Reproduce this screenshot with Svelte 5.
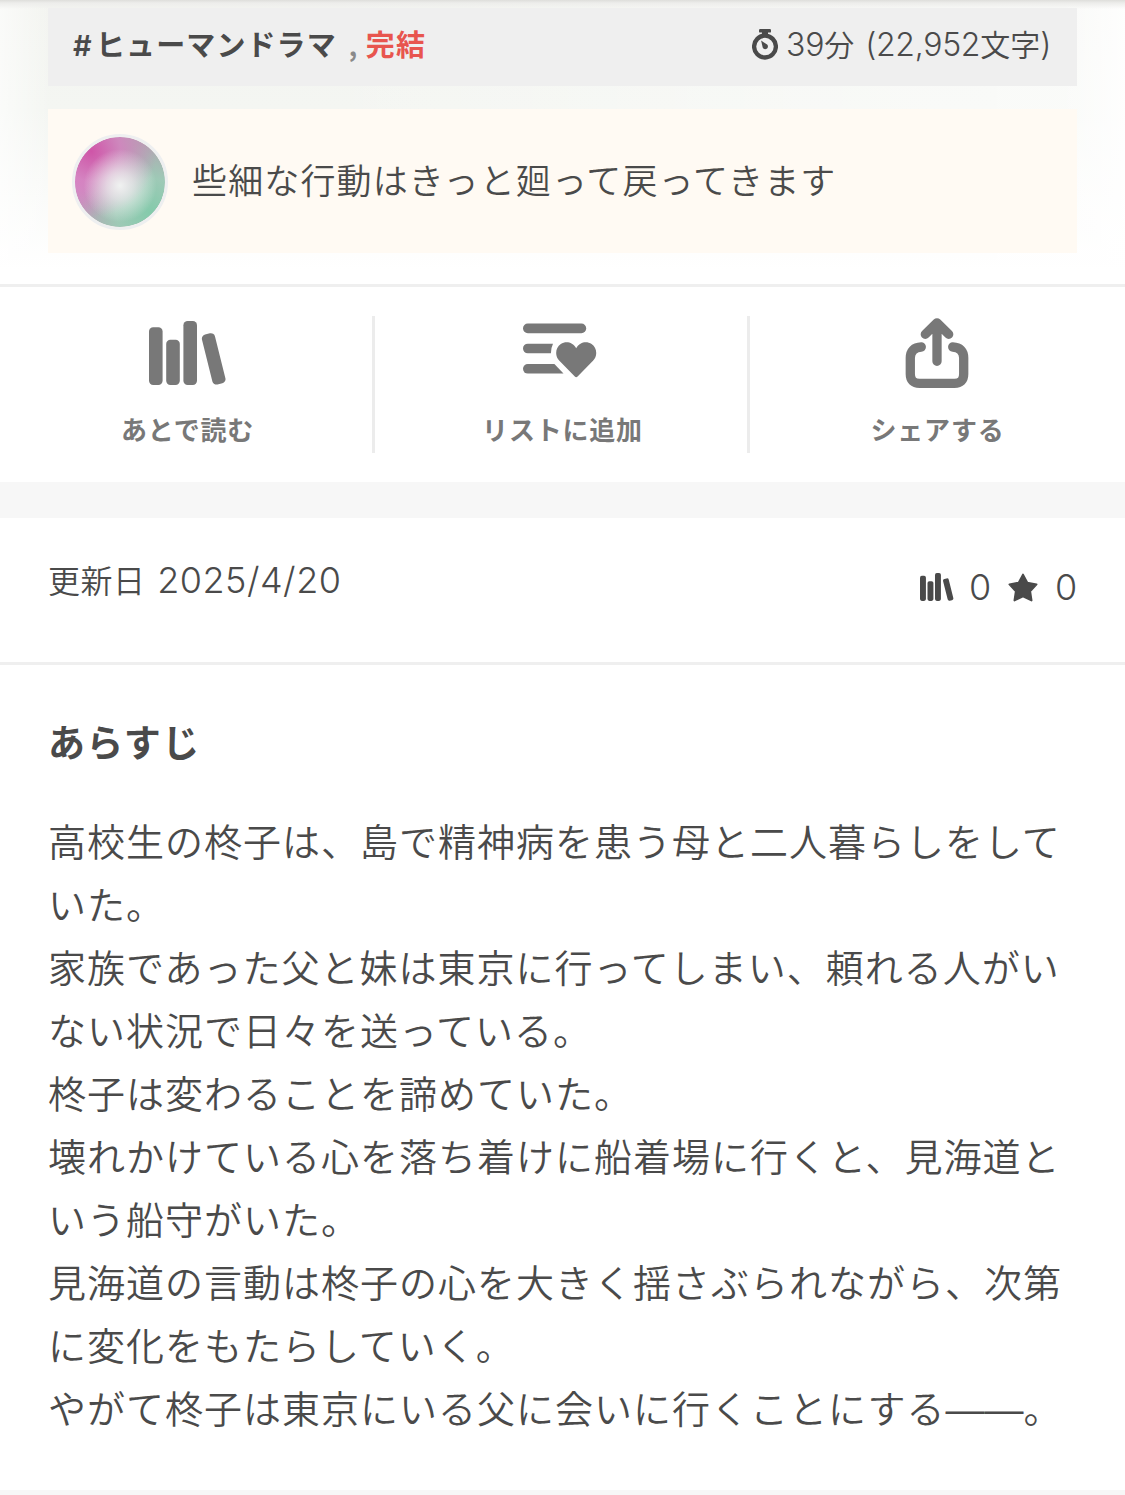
<script lang="ts">
  const tag = 'ヒューマンドラマ';
  const updatedAt = '2025/4/20';
  const counts = { shelf: 0, star: 0 };

  const synopsis = [
    '高校生の柊子は、島で精神病を患う母と二人暮らしをして',
    'いた。',
    '家族であった父と妹は東京に行ってしまい、頼れる人がい',
    'ない状況で日々を送っている。',
    '柊子は変わることを諦めていた。',
    '壊れかけている心を落ち着けに船着場に行くと、見海道と',
    'いう船守がいた。',
    '見海道の言動は柊子の心を大きく揺さぶられながら、次第',
    'に変化をもたらしていく。',
  ];
</script>

{#snippet books()}
  <svg class="books" viewBox="0 0 78 64" fill="currentColor">
    <rect x="0" y="6.3" width="13.6" height="57.7" rx="4.2" />
    <rect x="17.2" y="18.8" width="13.6" height="45.2" rx="4.2" />
    <rect x="34.4" y="0" width="13.6" height="64" rx="4.2" />
    <rect x="58" y="12.2" width="13.4" height="51.4" rx="4.2" transform="rotate(-14 64.7 37.9)" />
  </svg>
{/snippet}

<main class="page">
  <section class="top">
    <div class="tag-bar">
      <div class="tags">
        <span class="hash">#</span><span class="tag">{tag}</span><span class="comma">,</span><span class="state">完結</span>
      </div>
      <div class="length">
        <svg class="watch" viewBox="0 0 26 31">
          <rect x="7" y="0" width="12" height="3.6" rx="1.2" fill="currentColor" />
          <rect x="10" y="2" width="6" height="4" fill="currentColor" />
          <circle cx="13" cy="17.6" r="10.9" fill="none" stroke="currentColor" stroke-width="4.3" />
          <path d="M9.1 11.6l6 3.9a2.7 2.7 0 1 1-4.4 2.9z" fill="currentColor" />
        </svg>
        <span class="minutes">39<span class="unit">分</span></span>
        <span class="chars">(22,952<span class="unit">文字</span>)</span>
      </div>
    </div>
    <div class="comment">
      <div class="avatar"></div>
      <p>些細な行動はきっと廻って戻ってきます</p>
    </div>
  </section>

  <nav class="actions">
    <button>
      <span class="icon">{@render books()}</span>
      <span class="label">あとで読む</span>
    </button>
    <button>
      <span class="icon">
        <svg class="list" viewBox="0 0 74 55" fill="currentColor">
          <rect x="0" y="0.6" width="63.2" height="9.6" rx="4.8" />
          <path d="M4.8 20.7H30Q28 24.6 27.9 30.3H4.8a4.8 4.8 0 0 1 0-9.6z" />
          <path d="M4.8 41H31.4L40.5 50.6H4.8a4.8 4.8 0 0 1 0-9.6z" />
          <path d="M53.2 25.2C57 18.6 64 18.1 68.6 21.1C74.3 25 74.7 33 70 37.7L54.6 53.5Q53.2 54.9 51.8 53.5L36.4 37.7C31.7 33 32.1 25 37.8 21.1C42.4 18.1 49.4 18.6 53.2 25.2z" />
        </svg>
      </span>
      <span class="label">リストに追加</span>
    </button>
    <button>
      <span class="icon">
        <svg class="share" viewBox="0 0 64 72" fill="none" stroke="currentColor" stroke-width="9.3" stroke-linecap="round" stroke-linejoin="round">
          <path d="M16.3 30C9 30.3 5.3 34 5.3 41V57Q5.3 66.3 14.6 66.3H49.4Q58.7 66.3 58.7 57V41C58.7 34 55 30.3 47.7 30" />
          <path d="M32 44.3V6.3M20.3 17.3L32 5.8L43.7 17.3" />
        </svg>
      </span>
      <span class="label">シェアする</span>
    </button>
  </nav>

  <section class="info">
    <div class="updated">更新日 <span>{updatedAt}</span></div>
    <div class="counts">
      {@render books()}
      <span class="num">{counts.shelf}</span>
      <svg class="star" viewBox="0 0 30 29" fill="currentColor" stroke="currentColor" stroke-width="2" stroke-linejoin="round">
        <path d="M15 1.6L19.3 9.7L28.5 11.4L22.1 18.2L23.5 27.4L15 23.4L6.5 27.4L7.9 18.2L1.5 11.4L10.7 9.7z" />
      </svg>
      <span class="num">{counts.star}</span>
    </div>
  </section>

  <section class="synopsis">
    <h2>あらすじ</h2>
    {#each synopsis as line}
      <p>{line}</p>
    {/each}
    <p>やがて柊子は東京にいる父に会いに行くことにする<span class="dash">――</span>。</p>
  </section>
  <div class="footer-band"></div>
</main>

<style>
  :global(body) { margin: 0; background: #fff; overflow: hidden; }
  .page {
    width: 1125px; height: 1495px; overflow: hidden;
    display: flex; flex-direction: column;
    font-family: "Noto Sans CJK JP", sans-serif; font-weight: 350;
    color: #4a4a4a; white-space: nowrap;
  }
  p, h2 { margin: 0; }
  svg { display: block; flex: none; }

  .top {
    height: 276px; padding: 8px 48px 0;
    border-bottom: 3px solid #efefef;
    background:
      linear-gradient(#dededb, #ededeb 3px, #f4f4f200 9px),
      linear-gradient(90deg, #fff9 0, #fff0 50px, #fff0 1060px, #fffc 1125px),
      linear-gradient(90deg, #fff0 300px, #ffffff80 1000px),
      linear-gradient(#f3f4f0 0, #f4f6f2 110px, #fff 270px);
  }
  .tag-bar {
    height: 78px; box-sizing: border-box; padding: 0 26px 6px 25px;
    display: flex; justify-content: space-between; align-items: center;
    background: #efefef; font-size: 29px;
  }
  .tags { display: flex; align-items: baseline; font-weight: 700; padding-bottom: 2px; }
  .hash { width: 21px; font-family: Inter, sans-serif; font-weight: 600; margin-right: 2px; }
  .tag { letter-spacing: 1.1px; }
  .comma { width: 8px; color: #8a8a8a; font-size: 26px; margin: 0 9px 0 12px; }
  .state { color: #e8554e; letter-spacing: 1.1px; }
  .length, .counts, .updated span { font-family: Inter, "Noto Sans CJK JP", sans-serif; font-weight: 300; }
  .length { display: flex; align-items: center; font-size: 32px; letter-spacing: -0.3px; line-height: 48px; }
  .unit { font-size: 30px; font-weight: 350; font-family: "Noto Sans CJK JP", sans-serif; letter-spacing: 0; }
  .watch { width: 26px; height: 31px; margin-right: 8px; }
  .chars { margin-left: 11px; }

  .comment {
    height: 144px; box-sizing: border-box; margin-top: 23px; padding: 0 24px;
    display: flex; align-items: center;
    background: #fffaf3; font-size: 35px; letter-spacing: 1.13px;
  }
  .comment p { padding-bottom: 6px; }
  .avatar {
    width: 90px; height: 90px; margin: 1px 24px 0 0;
    border: 3px solid #eeeff0; border-radius: 50%;
    background:
      radial-gradient(circle at 50% 54%, #f0f2f1 0, #f0f2f1b0 20%, #f0f2f100 55%),
      radial-gradient(circle at 18% 16%, #cf55a8 0, #d680c0cc 28%, #d79bca00 62%),
      radial-gradient(circle at 84% 84%, #84caab 0, #9ad2b8cc 32%, #a9d9c300 65%),
      radial-gradient(circle at 0 50%, #d68bc9 0, #d68bc900 50%),
      #aea8b0;
    background-clip: padding-box;
  }

  .actions { height: 195px; display: grid; grid-template-columns: repeat(3, 1fr); padding-top: 29px; box-sizing: border-box; }
  .actions button {
    height: 137px; padding: 0 0 0 3px; border: 0; border-right: 3px solid #ececec; background: none;
    display: flex; flex-direction: column; align-items: center;
    font: inherit; color: #787878; cursor: pointer;
  }
  .actions button:last-child { border-right-color: #fff; }
  .icon { height: 73px; display: flex; align-items: center; }
  .actions .books { width: 78px; height: 64px; margin-left: 1px; }
  .list { width: 74px; height: 55px; margin: -5px 5px 0 0; }
  .share { width: 64px; height: 72px; margin-right: 2px; }
  .label { margin-top: 20px; font-size: 26px; line-height: 40px; font-weight: 700; letter-spacing: 0.8px; }

  .info {
    height: 144px; padding: 0 48px;
    border-top: 36px solid #f7f7f7; border-bottom: 3px solid #efefef;
    display: flex; justify-content: space-between;
    font-size: 32px; line-height: 48px;
  }
  .updated { padding-top: 37px; letter-spacing: 0.5px; }
  .updated span { margin-left: 4px; font-size: 36px; letter-spacing: 0.5px; }
  .counts { height: 48px; padding-top: 45px; display: flex; align-items: center; font-size: 36px; }
  .counts .books { width: 34px; height: 28px; }
  .num { width: 22px; margin-left: 15px; text-align: center; }
  .star { width: 30px; height: 29px; margin: 0 2px 0 17px; }

  .synopsis { height: 825px; padding: 0 48px; font-size: 38px; letter-spacing: 1px; }
  .synopsis h2 { height: 60px; margin: 46px 0 37px; font-size: 37px; line-height: 60px; font-weight: 700; letter-spacing: 1.3px; }
  .synopsis p { height: 63px; line-height: 63px; }
  .dash { font-family: "Liberation Sans", sans-serif; font-size: 39px; letter-spacing: 0; }
  .footer-band { height: 5px; background: #f7f7f7; }
</style>
